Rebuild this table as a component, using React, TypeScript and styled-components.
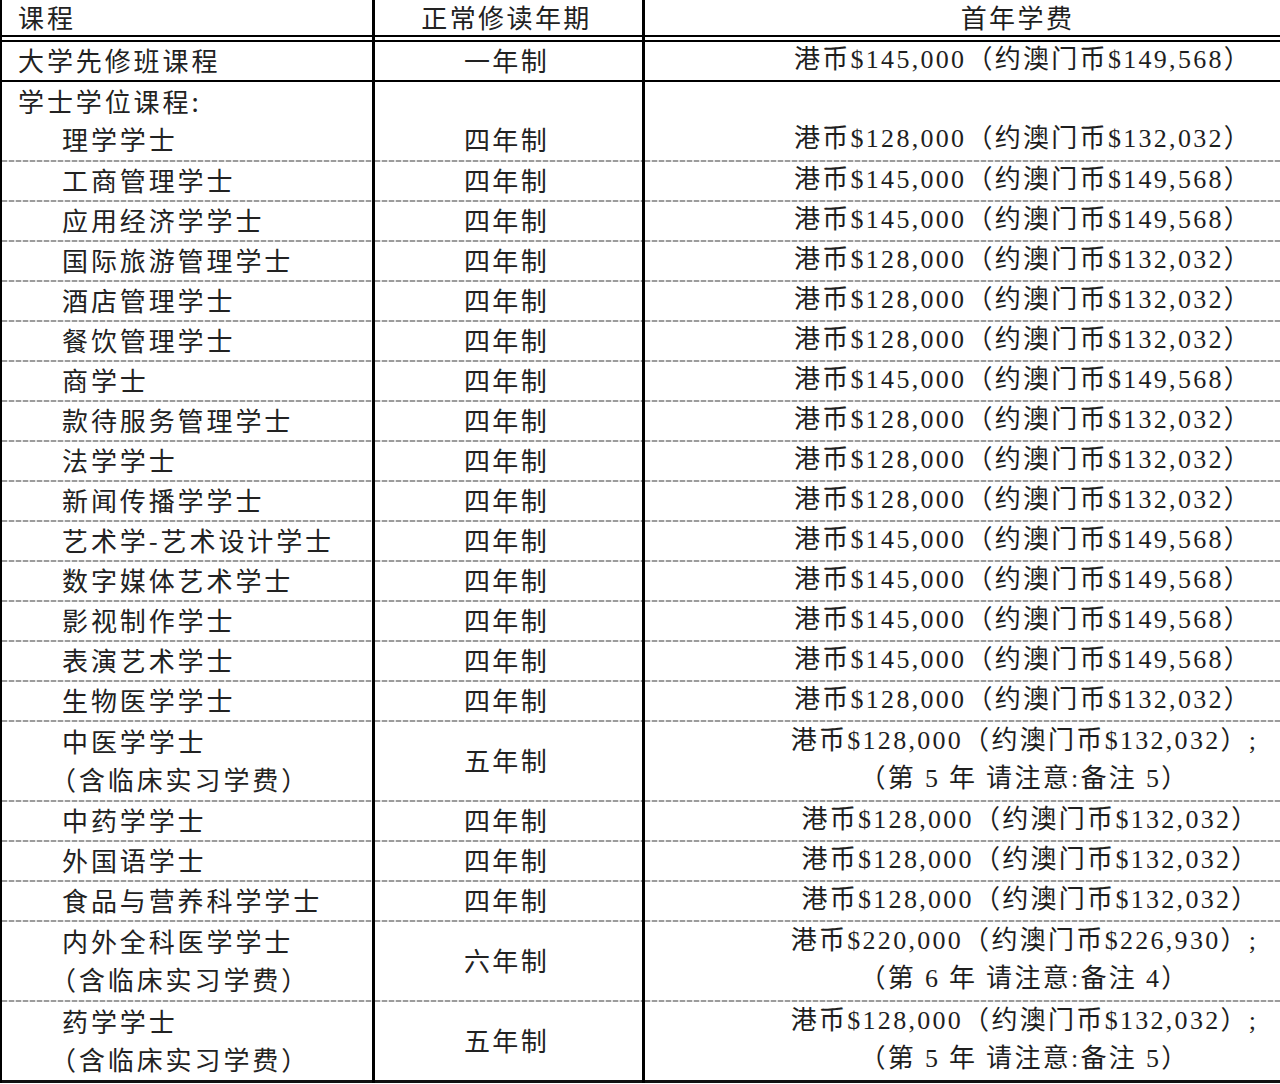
import { FC } from "react";
import styled, { createGlobalStyle, css } from "styled-components";

const GlobalStyle = createGlobalStyle`
	html, body {
		margin: 0;
		padding: 0;
		background: #fff;
		overflow: hidden;
	}
	body {
		font-family: "Noto Sans CJK SC", sans-serif;
		color: #222;
	}
`;

type Line = "double" | "solid" | "dashed" | "end";

// the rule under each row is painted as a background strip, so the column lines stay unbroken
const lineStyles = {
	double: css`
		padding-bottom: 9px;
		background: linear-gradient(#000, #000) left bottom / 100% 2px no-repeat,
			linear-gradient(#000, #000) left calc(100% - 5px) / 100% 2px no-repeat;
	`,
	solid: css`
		padding-bottom: 4px;
		background: linear-gradient(#000, #000) left bottom / 100% 2px no-repeat;
	`,
	dashed: css`
		padding-bottom: 4px;
		background: repeating-linear-gradient(90deg, #9c9c9c 0 5px, #e2e2e2 5px 7px) left bottom / 100% 2px
			no-repeat;
	`,
	end: css`
		padding-bottom: 5px;
		background: linear-gradient(#111, #111) left bottom / 100% 3px no-repeat;
	`,
};

const Table = styled.div`
	width: 1280px;
	border-left: 2px solid #000;
	box-sizing: border-box;
`;

const Row = styled.div`
	display: grid;
	grid-template-columns: 370px 270px 1fr;
`;

const Cell = styled.div<{ $line: Line; $tall?: boolean; $head?: boolean }>`
	box-sizing: border-box;
	font-size: 26px;
	letter-spacing: 2.9px;
	white-space: nowrap;
	line-height: ${(p) => (p.$head ? "33px" : p.$tall ? "38px" : "36px")};
	${(p) => lineStyles[p.$line]}
`;

const NameCell = styled(Cell)<{ $indent?: boolean }>`
	padding-left: ${(p) => (p.$indent ? "60px" : "16px")};
`;

const TermCell = styled(Cell)<{ $bottom?: boolean }>`
	border-left: 3px solid #000;
	text-align: center;
	display: flex;
	flex-direction: column;
	justify-content: ${(p) => (p.$bottom ? "flex-end" : "center")};
	padding-right: 4px;
	letter-spacing: 2.4px;
`;

const FeeCell = styled(Cell)<{ $pad: number; $bottom?: boolean; $serif?: boolean }>`
	border-left: 3px solid #000;
	text-align: center;
	display: flex;
	flex-direction: column;
	justify-content: ${(p) => (p.$bottom ? "flex-end" : "center")};
	padding-left: ${(p) => p.$pad}px;
	font-family: ${(p) =>
		p.$serif === false ? `"Noto Sans CJK SC", sans-serif` : `"Liberation Serif", "Noto Sans CJK SC", serif`};
	letter-spacing: ${(p) => (p.$serif === false ? "2.4px" : "2.3px")};
	color: #1e1e1e;
`;

const NameLine = styled.div<{ $sub?: boolean }>`
	padding-left: ${(p) => (p.$sub ? "44px" : "0")};
`;

const NoteLine = styled.div`
	margin-left: -12px;
`;

type Course = {
	name: string;
	term: string;
	fee: string;
	note?: string;
	pad?: number;
};

const course128 = "港币$128,000（约澳门币$132,032）";
const course145 = "港币$145,000（约澳门币$149,568）";

const courses: Course[] = [
	{ name: "工商管理学士", term: "四年制", fee: course145 },
	{ name: "应用经济学学士", term: "四年制", fee: course145 },
	{ name: "国际旅游管理学士", term: "四年制", fee: course128 },
	{ name: "酒店管理学士", term: "四年制", fee: course128 },
	{ name: "餐饮管理学士", term: "四年制", fee: course128 },
	{ name: "商学士", term: "四年制", fee: course145 },
	{ name: "款待服务管理学士", term: "四年制", fee: course128 },
	{ name: "法学学士", term: "四年制", fee: course128 },
	{ name: "新闻传播学学士", term: "四年制", fee: course128 },
	{ name: "艺术学-艺术设计学士", term: "四年制", fee: course145 },
	{ name: "数字媒体艺术学士", term: "四年制", fee: course145 },
	{ name: "影视制作学士", term: "四年制", fee: course145 },
	{ name: "表演艺术学士", term: "四年制", fee: course145 },
	{ name: "生物医学学士", term: "四年制", fee: course128 },
	{
		name: "中医学学士",
		term: "五年制",
		fee: course128 + ";",
		note: "（第 5 年 请注意:备注 5）",
		pad: 124,
	},
	{ name: "中药学学士", term: "四年制", fee: course128, pad: 136 },
	{ name: "外国语学士", term: "四年制", fee: course128, pad: 136 },
	{ name: "食品与营养科学学士", term: "四年制", fee: course128, pad: 136 },
	{
		name: "内外全科医学学士",
		term: "六年制",
		fee: "港币$220,000（约澳门币$226,930）;",
		note: "（第 6 年 请注意:备注 4）",
		pad: 124,
	},
	{
		name: "药学学士",
		term: "五年制",
		fee: course128 + ";",
		note: "（第 5 年 请注意:备注 5）",
		pad: 124,
	},
];

const App: FC = () => {
	return (
		<>
			<GlobalStyle />
			<Table>
				<Row>
					<NameCell $line="double" $head>
						课程
					</NameCell>
					<TermCell $line="double" $head>
						正常修读年期
					</TermCell>
					<FeeCell $line="double" $head $pad={110} $serif={false}>
						首年学费
					</FeeCell>
				</Row>
				<Row>
					<NameCell $line="solid">大学先修班课程</NameCell>
					<TermCell $line="solid">一年制</TermCell>
					<FeeCell $line="solid" $pad={121}>
						{course145}
					</FeeCell>
				</Row>
				<Row>
					<NameCell $line="dashed" $tall>
						<NameLine>学士学位课程:</NameLine>
						<NameLine $sub>理学学士</NameLine>
					</NameCell>
					<TermCell $line="dashed" $tall $bottom>
						四年制
					</TermCell>
					<FeeCell $line="dashed" $tall $bottom $pad={121}>
						{course128}
					</FeeCell>
				</Row>
				{courses.map((c, i) => {
					const line: Line = i === courses.length - 1 ? "end" : "dashed";
					const tall = !!c.note;
					return (
						<Row key={c.name}>
							<NameCell $line={line} $tall={tall} $indent>
								<NameLine>{c.name}</NameLine>
								{tall && <NoteLine>（含临床实习学费）</NoteLine>}
							</NameCell>
							<TermCell $line={line} $tall={tall}>
								{c.term}
							</TermCell>
							<FeeCell $line={line} $tall={tall} $pad={c.pad ?? 121}>
								<div>{c.fee}</div>
								{c.note && <div>{c.note}</div>}
							</FeeCell>
						</Row>
					);
				})}
			</Table>
		</>
	);
};

export default App;
